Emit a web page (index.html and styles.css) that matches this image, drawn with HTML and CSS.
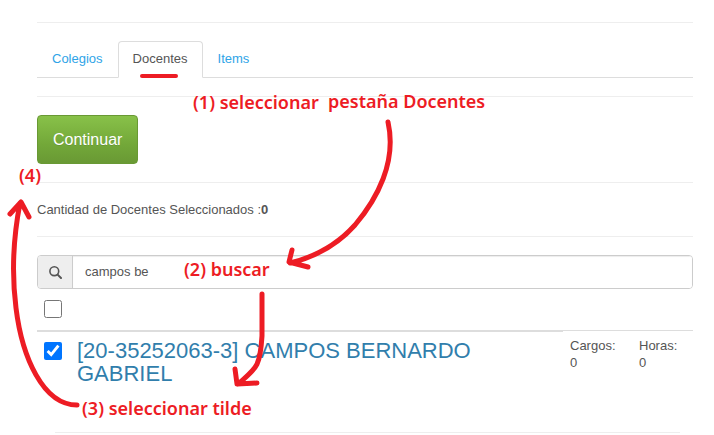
FILE: index.html
```html
<!DOCTYPE html>
<html lang="es">
<head>
  <meta charset="UTF-8">
  <meta name="viewport" content="width=device-width, initial-scale=1.0">
  <title>Docentes</title>
  <link rel="stylesheet" href="styles.css">
</head>
<body>
  <div class="container">
    <hr>
    <ul class="nav-tabs">
      <li><a href="#colegios">Colegios</a></li>
      <li class="active"><a href="#docentes">Docentes</a></li>
      <li><a href="#items">Items</a></li>
    </ul>
    <hr>
    <button type="button" class="btn">Continuar</button>
    <hr>
    <p class="count">Cantidad de Docentes Seleccionados :<b>0</b></p>
    <hr>
    <div class="input-group">
      <label class="addon" for="buscar" aria-label="Buscar">
        <svg width="13" height="13" viewBox="0 0 13 13" fill="none" stroke="#555">
          <circle cx="5.3" cy="5.2" r="4.4" stroke-width="1.6"/>
          <path d="M8.6 8.6L12 12" stroke-width="2" stroke-linecap="round"/>
        </svg>
      </label>
      <input type="text" id="buscar" class="form-control" value="campos be">
    </div>
    <table class="table">
      <thead>
        <tr>
          <th class="check"><input type="checkbox" aria-label="Seleccionar todos"></th>
          <th></th>
          <td class="num"></td>
          <td class="num"></td>
        </tr>
      </thead>
      <tbody>
        <tr>
          <td class="check"><input type="checkbox" id="docente" checked></td>
          <td class="name"><label for="docente">[20-35252063-3] CAMPOS BERNARDO GABRIEL</label></td>
          <td class="num">Cargos:<br>0</td>
          <td class="num">Horas:<br>0</td>
        </tr>
      </tbody>
    </table>
    <hr class="inner">
  </div>

  <!-- pasos de ayuda sobre la pantalla -->
  <div class="guide">
    <svg class="arrows" width="714" height="435" viewBox="0 0 714 435">
      <path d="M142 76H176" stroke-width="4"/>
      <path d="M388 122C397 162 377 199 355 225C338 244 315 257 290 263M292 250L289 262L308 267"/>
      <path d="M262 294V336C260 368 256 368 238 384M235 369L237 384L257 383"/>
      <path d="M77 405C43 405 22 357 16 308C11 269 14 234 20 203M10 214L21 202L29 217"/>
    </svg>
    <span class="step step-1">(1) seleccionar</span>
    <span class="step step-1b">pestaña Docentes</span>
    <span class="step step-2">(2) buscar</span>
    <span class="step step-3">(3) seleccionar tilde</span>
    <span class="step step-4">(4)</span>
  </div>
</body>
</html>
```
FILE: styles.css
```css
* {
  box-sizing: border-box;
}
body {
  margin: 0;
  position: relative;
  font-family: "Liberation Sans", Arial, sans-serif;
  font-size: 13px;
  line-height: 18px;
  color: #555;
  background: #fff;
}
.container {
  padding: 4px 21px 0 37px;
}
hr {
  margin: 18px 0;
  border: 0;
  border-top: 1px solid #eee;
}
.nav-tabs {
  display: flex;
  margin: 0;
  padding: 0;
  list-style: none;
  border-bottom: 1px solid #ddd;
}
.nav-tabs li {
  margin-bottom: -1px;
}
.nav-tabs a {
  display: block;
  padding: 8px 14px 9px;
  border: 1px solid transparent;
  border-radius: 4px 4px 0 0;
  color: #2fa4e7;
  text-decoration: none;
}
.nav-tabs .active a {
  color: #555;
  background: #fff;
  border-color: #ddd #ddd #fff;
}
.btn {
  display: block;
  padding: 13px 15px;
  font-family: inherit;
  font-size: 16px;
  line-height: 21px;
  color: #fff;
  text-shadow: 0 1px 0 rgba(0, 0, 0, 0.1);
  background: linear-gradient(#88c149, #73a839 60%, #699934);
  border: 1px solid #699934;
  border-radius: 4px;
  cursor: pointer;
}
.count {
  margin: 0;
  line-height: 17px;
}
.input-group {
  display: flex;
  height: 34px;
  border: 1px solid #ccc;
  border-radius: 4px;
  overflow: hidden;
}
.addon {
  display: flex;
  align-items: center;
  padding: 0 10px 0 11px;
  background: #eee;
  border-right: 1px solid #ccc;
}
.form-control {
  flex: 1;
  padding: 0 12px;
  border: 0;
  outline: 0;
  font: inherit;
  color: #555;
  box-shadow: inset 0 1px 1px rgba(0, 0, 0, 0.075);
}
.table {
  width: 100%;
  border-spacing: 0;
}
.table th,
.table td {
  padding: 5px 7px;
  text-align: left;
  vertical-align: top;
}
.table thead th,
.table thead td {
  height: 43px;
  padding-top: 11px;
}
.table thead th {
  border-bottom: 2px solid #ddd;
}
.table thead td {
  background: linear-gradient(#ddd, #ddd) 0 41px / 100% 1px no-repeat;
}
.check {
  width: 33px;
}
.check input {
  display: block;
  width: 18px;
  height: 18px;
  margin: 0;
}
.table tbody td {
  line-height: 17px;
}
.table tbody .check {
  padding-top: 10px;
}
.table tbody .name {
  padding-top: 7px;
  font-size: 22px;
  line-height: 23px;
  color: #317eac;
}
.num {
  width: 69px;
}
.table .num:last-child {
  width: 61px;
}
.inner {
  margin: 42px 13px 0 18px;
}
.guide {
  position: absolute;
  top: 0;
  left: 0;
  color: #ed1c24;
  pointer-events: none;
}
.arrows {
  display: block;
  fill: none;
  stroke: #ed1c24;
  stroke-width: 5;
  stroke-linecap: round;
  stroke-linejoin: round;
}
.step {
  position: absolute;
  font-family: "Noto Sans", "Open Sans", sans-serif;
  font-size: 18px;
  font-weight: 600;
  line-height: 24px;
  white-space: nowrap;
}
.step-1 {
  left: 193px;
  top: 90px;
}
.step-1b {
  left: 328px;
  top: 89px;
}
.step-2 {
  left: 184px;
  top: 257px;
}
.step-3 {
  left: 82px;
  top: 396px;
}
.step-4 {
  left: 19px;
  top: 163px;
}
```
